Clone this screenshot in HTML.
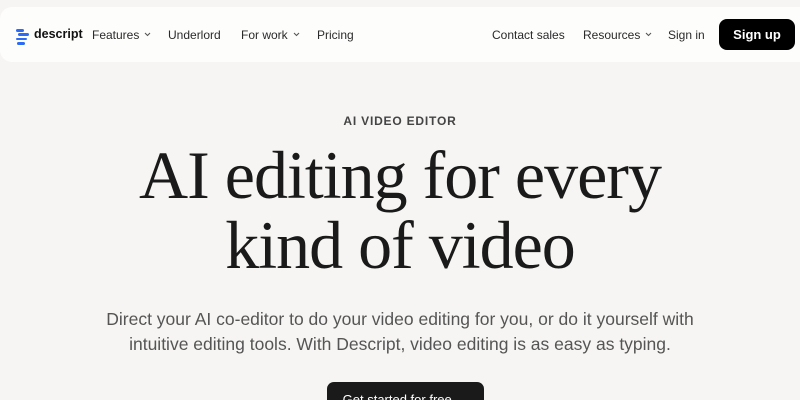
<!DOCTYPE html>
<html><head><style>
html,body{margin:0;width:800px;height:400px;overflow:hidden}
body{background:#f6f5f3;font-family:"Liberation Sans",sans-serif;color:#1a1a1a;position:relative}
.nav{position:absolute;left:0;top:7px;width:800px;height:55px;background:#fdfdfc;border-radius:12px 0 0 12px}
.nav .t{position:absolute;top:21px;font-size:12px;color:#2a2a2a;white-space:nowrap}
.nav svg.c{margin-left:5px;vertical-align:2px}
.logo{position:absolute;left:16px;top:22px}
.logo i{display:block;height:2.6px;background:#2c6bf5;border-radius:2px;margin-bottom:1.8px}
.btn{position:absolute;left:719px;top:12px;width:76px;height:31px;background:#000;border-radius:8px;color:#fff;font-size:13px;font-weight:bold;text-align:center;line-height:31px}
.eyebrow{position:absolute;top:114px;width:800px;text-align:center;font-size:12px;letter-spacing:0.8px;color:#444;font-weight:bold}
h1{position:absolute;top:140px;width:800px;margin:0;text-align:center;font-family:"Liberation Serif",serif;font-weight:normal;font-size:68px;line-height:70px;color:#1a1a1a;letter-spacing:-1px}
p{position:absolute;top:307px;width:800px;margin:0;text-align:center;font-size:17.5px;line-height:25px;color:#555}
.cta{position:absolute;left:327px;top:382px;width:157px;height:18px;overflow:hidden;background:#1a1a1a;border-radius:7px 7px 0 0;color:#fff;font-size:13px;text-align:center;line-height:36px}
</style></head><body>
<div class="nav">
 <div class="logo"><i style="width:8px"></i><i style="width:11px;margin-left:2px"></i><i style="width:11px"></i><i style="width:8px;margin-left:1px"></i></div>
 <span class="t" style="left:34px;font-weight:bold;font-size:12.5px;top:20px;color:#111">descript</span>
 <span class="t" style="left:92px">Features<svg class="c" width="7" height="5" viewBox="0 0 7 5"><path d="M1 1l2.5 2.5L6 1" stroke="#555" fill="none" stroke-width="1.1"/></svg></span>
 <span class="t" style="left:168px">Underlord</span>
 <span class="t" style="left:241px">For work<svg class="c" width="7" height="5" viewBox="0 0 7 5"><path d="M1 1l2.5 2.5L6 1" stroke="#555" fill="none" stroke-width="1.1"/></svg></span>
 <span class="t" style="left:317px">Pricing</span>
 <span class="t" style="left:492px">Contact sales</span>
 <span class="t" style="left:583px">Resources<svg class="c" width="7" height="5" viewBox="0 0 7 5"><path d="M1 1l2.5 2.5L6 1" stroke="#555" fill="none" stroke-width="1.1"/></svg></span>
 <span class="t" style="left:668px">Sign in</span>
 <div class="btn">Sign up</div>
</div>
<div class="eyebrow">AI VIDEO EDITOR</div>
<h1>AI editing for every<br>kind of video</h1>
<p>Direct your AI co-editor to do your video editing for you, or do it yourself with<br>intuitive editing tools. With Descript, video editing is as easy as typing.</p>
<div class="cta">Get started for free →</div>
</body></html>
